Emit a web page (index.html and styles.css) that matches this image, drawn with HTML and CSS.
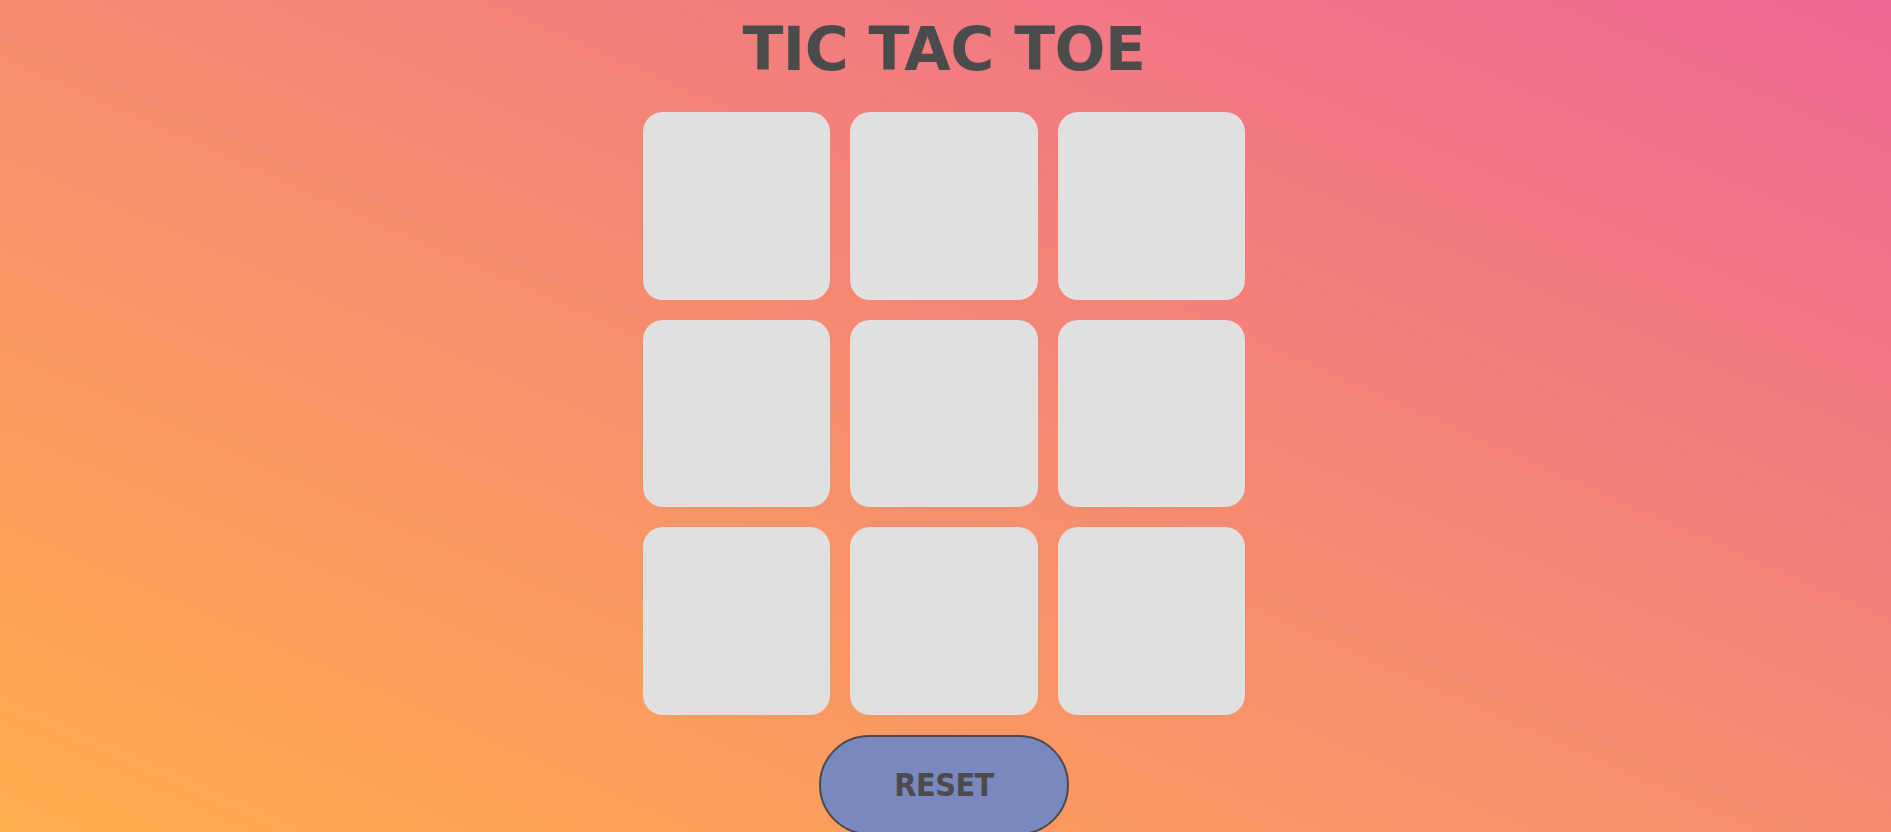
FILE: index.html
```html
<!DOCTYPE html>
<html lang="en">
<head>
<meta charset="utf-8">
<title>Tic Tac Toe</title>
<link rel="stylesheet" href="styles.css">
</head>
<body>
<main class="game">
  <h1 class="title">TIC TAC TOE</h1>
  <div class="board">
    <div class="cell"></div>
    <div class="cell"></div>
    <div class="cell"></div>
    <div class="cell"></div>
    <div class="cell"></div>
    <div class="cell"></div>
    <div class="cell"></div>
    <div class="cell"></div>
    <div class="cell"></div>
  </div>
  <button class="reset" type="button">RESET</button>
</main>
</body>
</html>
```

FILE: styles.css
```css
html, body {
  margin: 0;
  padding: 0;
  height: 100%;
}

body {
  background: linear-gradient(to top right, #ffae4d, #ed6894);
  overflow: hidden;
  font-family: "DejaVu Sans", sans-serif;
  color: #4b4b4b;
}

.game {
  display: flex;
  flex-direction: column;
  align-items: center;
  gap: 20px;
  padding-right: 3px;
}

.title {
  margin: 0;
  padding-top: 6px;
  height: 86px;
  line-height: 86px;
  font-family: "DejaVu Sans", sans-serif;
  font-size: 60px;
  font-weight: bold;
  letter-spacing: -0.5px;
  color: #4b4b4b;
}

.board {
  display: grid;
  grid-template-columns: repeat(3, 187.33px);
  grid-template-rows: repeat(3, 187.67px);
  gap: 20px;
}

.cell {
  background: #e1e0de;
  border-radius: 20px;
}

.reset {
  width: 250px;
  height: 100px;
  border: 2px solid #4b4b4b;
  border-radius: 50px;
  background: #7a88bf;
  color: #4b4b4b;
  font-family: "DejaVu Sans Condensed", "DejaVu Sans", sans-serif;
  font-size: 32px;
  font-weight: bold;
  letter-spacing: -0.5px;
  padding: 0;
  cursor: pointer;
}
```
